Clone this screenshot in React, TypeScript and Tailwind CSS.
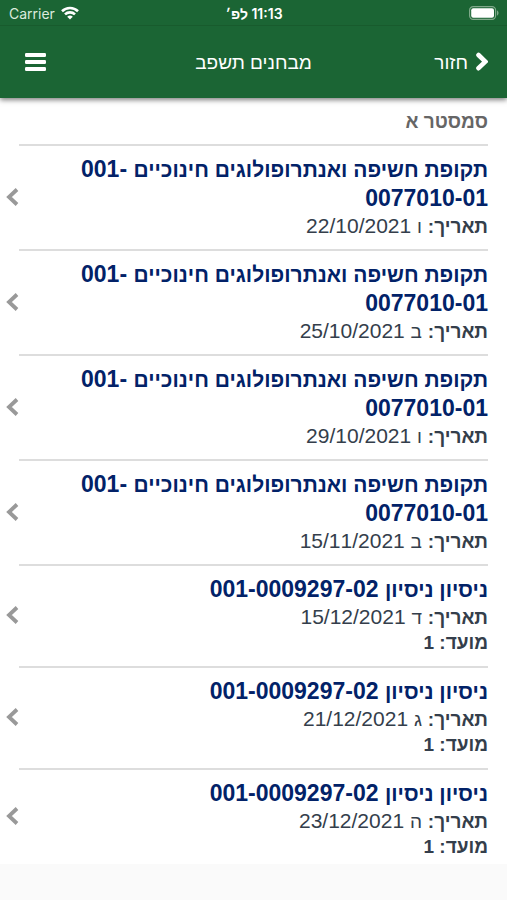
import React from "react";

type Course = { name: string; faculty: string; code: string };
type Exam = Course & { date: string; day: string; term?: string };

const fieldwork: Course = { name: "תקופת חשיפה ואנתרופולוגים חינוכיים", faculty: "001-", code: "0077010-01" };
const trial: Course = { name: "ניסיון ניסיון", faculty: "001-", code: "0009297-02" };

const exams: Exam[] = [
  { ...fieldwork, day: "ו", date: "22/10/2021" },
  { ...fieldwork, day: "ב", date: "25/10/2021" },
  { ...fieldwork, day: "ו", date: "29/10/2021" },
  { ...fieldwork, day: "ב", date: "15/11/2021" },
  { ...trial, day: "ד", date: "15/12/2021", term: "1" },
  { ...trial, day: "ג", date: "21/12/2021", term: "1" },
  { ...trial, day: "ה", date: "23/12/2021", term: "1" },
];

function StatusBar() {
  return (
    <div dir="ltr" className="grid h-[26px] grid-cols-3 items-center border-b border-[#185b2d] pt-px pr-2 pl-[9px] font-[Inter,'Liberation_Sans',sans-serif] text-[14px]">
      <div className="flex items-center gap-[6px] text-[#dcebdd]">
        <span>Carrier</span>
        <svg viewBox="0 0 18 14" className="h-[14px] w-[18px]" fill="none" stroke="white" strokeWidth="2.6" aria-hidden="true">
          <path d="M1 5.2a11.5 11.5 0 0 1 16 0M4 8.4a7.2 7.2 0 0 1 10 0" />
          <path d="M9 13.6 6.2 10.8a4 4 0 0 1 5.6 0z" fill="white" stroke="none" />
        </svg>
      </div>
      <div dir="rtl" className="text-center font-semibold">11:13 לפ׳</div>
      <svg viewBox="0 0 30 14" className="h-[14px] w-[30px] justify-self-end" aria-hidden="true">
        <rect x="0.6" y="0.6" width="26" height="12.8" rx="3.6" fill="none" stroke="#7fa98a" strokeWidth="1.2" />
        <rect x="2.2" y="2.2" width="22.8" height="9.6" rx="2" fill="white" />
        <path d="M28 4.5c2 .6 2 4.400 0 5z" fill="#7fa98a" />
      </svg>
    </div>
  );
}

function NavBar() {
  return (
    <nav className="grid h-[72px] grid-cols-3 items-center px-[19px] text-[19px]">
      <button type="button" className="flex items-center gap-2 justify-self-start">
        <svg viewBox="0 0 12 20" className="h-5 w-3" aria-hidden="true">
          <path d="m2.500 3 6.800 6.600-6.800 6.600" fill="none" stroke="white" strokeWidth="4.600" strokeLinecap="round" />
        </svg>
        <span className="pt-[2px]">חזור</span>
      </button>
      <h1 className="pt-[2px] text-center whitespace-nowrap">מבחנים תשפב</h1>
      <button type="button" aria-label="תפריט" className="mx-[6px] justify-self-end">
        <svg viewBox="0 0 21 18" className="h-[18px] w-[21px]" fill="white" aria-hidden="true">
          <rect width="21" height="4" rx="1.2" />
          <rect y="7" width="21" height="4" rx="1.2" />
          <rect y="14" width="21" height="4" rx="1.2" />
        </svg>
      </button>
    </nav>
  );
}

function ExamRow({ exam }: { exam: Exam }) {
  return (
    <li className="group">
      <button type="button" className="flex w-full items-center pr-[19px] pl-[6px] text-right">
        <span className="block min-w-0 flex-1 border-t-2 border-[#dddddd] pt-[9px] pb-[10px] text-[21px] leading-[26px] text-[#343e4b] group-last:pb-1">
          <span className="block text-[23px] leading-[29px] font-bold text-[#022268]">
            <span className="text-[21px] leading-none">{exam.name}</span> {exam.faculty}
            <wbr />
            {exam.code}
          </span>
          <span className="block">
            <b className="text-[19px] leading-none">תאריך:</b>{" "}
            <span className="text-[19px] leading-none">{exam.day}</span> {exam.date}
          </span>
          {exam.term && <b className="block text-[19px] leading-[26px]">מועד: {exam.term}</b>}
        </span>
        <svg viewBox="0 0 13 18" className="h-[18px] w-[13px]" aria-hidden="true">
          <path d="M11 1.500 3 9l8 7.500" fill="none" stroke="#999999" strokeWidth="3.800" />
        </svg>
      </button>
    </li>
  );
}

export default function App() {
  return (
    <div dir="rtl" className="min-h-screen bg-[#fafafa] font-['Liberation_Sans',Arial,sans-serif]">
      <header className="relative bg-[#1b6534] text-white shadow-[0_2px_5px_rgba(0,0,0,0.5)]">
        <StatusBar />
        <NavBar />
      </header>
      <main className="bg-white">
        <h2 className="px-[19px] pt-[11px] pb-[9px] text-[19px] leading-[26px] font-bold text-[#666666]">סמסטר א</h2>
        <ul>
          {exams.map((exam) => (
            <ExamRow key={exam.date} exam={exam} />
          ))}
        </ul>
      </main>
    </div>
  );
}
